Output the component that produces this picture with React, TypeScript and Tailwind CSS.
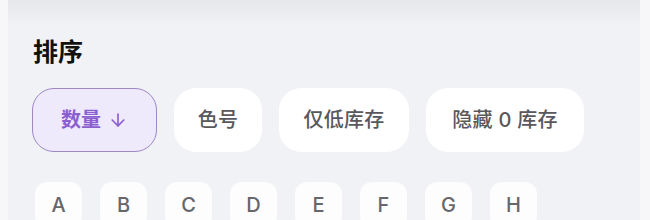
import React, { useState } from "react";
import { ArrowDown } from "lucide-react";

const SORTS = [
  { key: "qty", label: "数量", width: "w-[125px]" },
  { key: "color", label: "色号", width: "w-[88px]" },
  { key: "low", label: "仅低库存", width: "w-[130px]" },
  { key: "hide", label: "隐藏 0 库存", width: "w-[158px]" },
];

const LETTERS = ["A", "B", "C", "D", "E", "F", "G", "H"];

export default function App() {
  const [active, setActive] = useState("qty");

  return (
    <div
      className="flex h-[220px] w-[650px] overflow-hidden bg-[#f7f7f9]"
      style={{ fontFamily: '"Inter", "Noto Sans CJK SC", sans-serif' }}
    >
      <div className="ml-[8px] mr-[10px] flex-1 bg-[#f1f2f5]">
        {/* 上方卡片的陰影 */}
        <div className="h-[26px] bg-gradient-to-b from-[#e6e7eb] to-[#f1f2f5]" />

        <div className="pl-[24px]">
          <h2 className="ml-[1px] mt-[10px] text-[25px] font-bold leading-[32px] text-[#111111]">排序</h2>

          <div className="mt-[20px] flex gap-[17px]">
            {SORTS.map((s) => {
              const on = s.key === active;
              return (
                <button
                  key={s.key}
                  onClick={() => setActive(s.key)}
                  className={
                    on
                      ? `${s.width} flex h-[64px] items-center justify-center gap-[7px] rounded-[22px] border-[1.5px] border-[#9d88c4] bg-[#efe9fc] text-[20px] font-semibold text-[#8c5fd0]`
                      : `${s.width} flex h-[64px] items-center justify-center rounded-[22px] bg-white text-[20px] font-medium tracking-[0.3px] text-[#58585d]`
                  }
                >
                  <span>{s.label}</span>
                  {on && <ArrowDown size={20} strokeWidth={2} />}
                </button>
              );
            })}
          </div>

          <div className="ml-[3px] mt-[30px] flex gap-[18px]">
            {LETTERS.map((l) => (
              <div
                key={l}
                className="flex h-[46px] w-[47px] items-center justify-center rounded-[12px] bg-[#fdfdfe] text-[20px] font-medium text-[#66666b]"
              >
                {l}
              </div>
            ))}
          </div>
        </div>
      </div>
    </div>
  );
}
